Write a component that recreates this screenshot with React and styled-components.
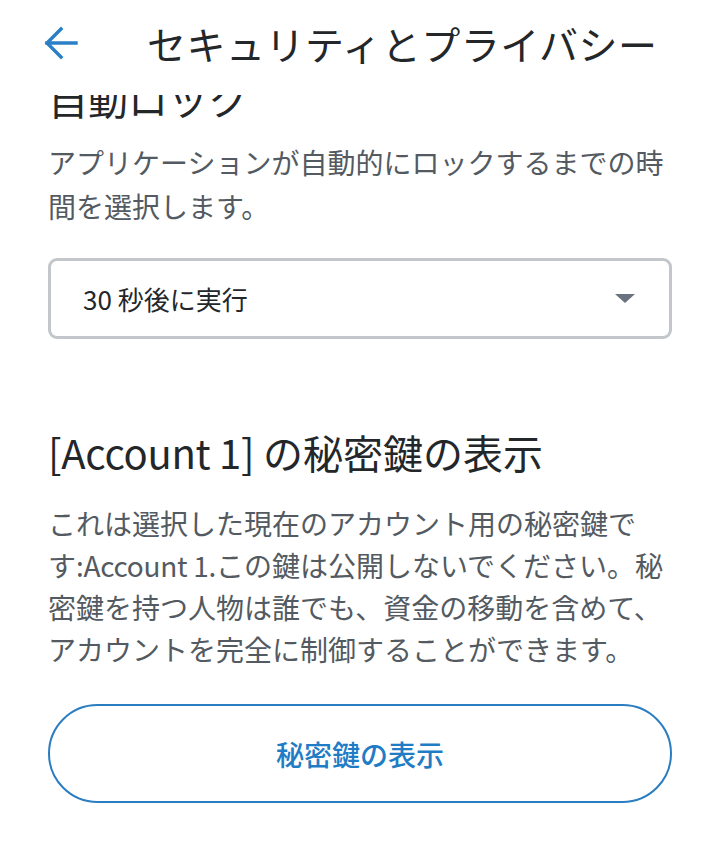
import React from 'react';
import styled, { createGlobalStyle } from 'styled-components';

const GlobalStyle = createGlobalStyle`
  html, body {
    margin: 0;
    padding: 0;
    background: #ffffff;
  }
  body {
    font-family: "Noto Sans CJK JP", "Noto Sans", sans-serif;
    color: #24272a;
  }
`;

const Page = styled.div`
  width: 719px;
  height: 864px;
  display: flex;
  flex-direction: column;
  background: #fff;
  overflow: hidden;
`;

const Header = styled.header`
  height: 95px;
  flex-shrink: 0;
  display: flex;
  align-items: flex-start;
  padding: 22px 0 0 42px;
  box-sizing: border-box;
  background: #fff;
`;

const BackButton = styled.button`
  width: 38px;
  height: 42px;
  padding: 0;
  margin: 0;
  border: none;
  background: none;
  color: #2b7fc6;
  display: flex;
  align-items: center;
  justify-content: center;
`;

const Title = styled.h1`
  margin: 0 0 0 67px;
  font-size: 39px;
  font-weight: 400;
  line-height: 42px;
  letter-spacing: 0.5px;
  color: #24272a;
`;

const Body = styled.main`
  flex: 1;
  overflow: hidden;
  padding: 0 47px 0 48px;
`;

const SectionTitle = styled.h2`
  margin: ${p => p.$top || '0'} 0 0;
  font-size: ${p => p.$size || '40px'};
  font-weight: 400;
  line-height: ${p => p.$lh || '52px'};
  color: #24272a;
`;

const Latin = styled.span`
  letter-spacing: -0.3px;
`;

const Description = styled.p`
  margin: ${p => p.$top || '16px'} 0 0;
  font-size: 28px;
  line-height: ${p => p.$lh || '44px'};
  color: #535a61;
  line-break: strict;
`;

const Select = styled.div`
  margin-top: 30px;
  height: 81px;
  box-sizing: border-box;
  border: 3px solid #c3c7cb;
  border-radius: 9px;
  display: flex;
  align-items: center;
  justify-content: space-between;
  padding: 0 34px 0 32px;
  font-size: 26px;
  color: #24272a;
`;

const Caret = styled.span`
  width: 0;
  height: 0;
  border-left: 10px solid transparent;
  border-right: 10px solid transparent;
  border-top: 9px solid #6a737d;
`;

const OutlineButton = styled.button`
  margin-top: 34px;
  width: 100%;
  height: 99px;
  box-sizing: border-box;
  border: 2px solid #2a7dc0;
  border-radius: 50px;
  background: #fff;
  color: #1f7cc5;
  font-family: "Noto Sans CJK JP", sans-serif;
  font-size: 28px;
  font-weight: 500;
  cursor: pointer;
`;

const ArrowIcon = () => (
  <svg width="34" height="36" viewBox="0 0 34 36" fill="none" stroke="currentColor" strokeWidth="3.4" strokeLinecap="square">
    <path d="M3 18H32" />
    <path d="M17 4L3 18L17 32" />
  </svg>
);

const App = () => {
  return (
    <>
      <GlobalStyle />
      <Page>
        <Header>
          <BackButton aria-label="戻る">
            <ArrowIcon />
          </BackButton>
          <Title>セキュリティとプライバシー</Title>
        </Header>
        <Body>
          <SectionTitle $top="-23px">自動ロック</SectionTitle>
          <Description>
            アプリケーションが自動的にロックするまでの時間を選択します。
          </Description>
          <Select>
            <span>30 秒後に実行</span>
            <Caret />
          </Select>
          <SectionTitle $top="86px" $size="40px" $lh="55px">
            <Latin>[Account 1]</Latin> の秘密鍵の表示
          </SectionTitle>
          <Description $top="22px" $lh="42px">
            これは選択した現在のアカウント用の秘密鍵です<Latin>:Account 1.</Latin>この鍵は公開しないでください。秘密鍵を持つ人物は誰でも、資金の移動を含めて、アカウントを完全に制御することができます。
          </Description>
          <OutlineButton>秘密鍵の表示</OutlineButton>
        </Body>
      </Page>
    </>
  );
};

export default App;
